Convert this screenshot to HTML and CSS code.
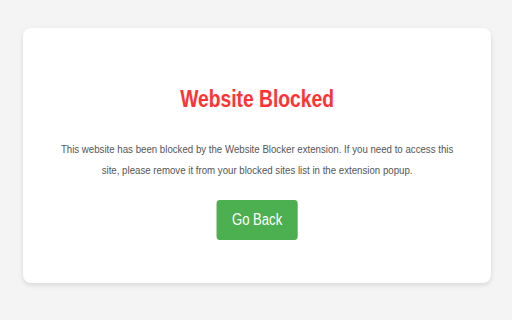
FILE: index.html
```html
<!DOCTYPE html>
<html lang="en">
<head>
    <meta charset="UTF-8">
    <meta name="viewport" content="width=device-width, initial-scale=1.0">
    <title>Website Blocked</title>
    <link rel="stylesheet" href="styles.css">
</head>
<body>
    <!-- Blocked page card -->
    <div class="container">
        <div class="content">
            <h1>Website Blocked</h1>
            <p>This website has been blocked by the Website Blocker extension. If you need to access this site, please remove it from your blocked sites list in the extension popup.</p>
            <button class="back-button" onclick="history.back()">Go Back</button>
        </div>
    </div>
</body>
</html>
```

FILE: styles.css
```css
* {
  margin: 0;
  padding: 0;
  box-sizing: border-box;
}

body {
  font-family: "Liberation Sans", Arial, sans-serif;
  background-color: #f4f4f4;
  padding: 28px 21px 37px 23px;
  height: 100vh;
}

.container {
  background-color: #fff;
  border-radius: 8px;
  box-shadow: 0 2px 5px rgba(0, 0, 0, 0.12);
  height: 100%;
  padding-top: 58px;
  overflow: hidden;
}

/* the text in the shot is narrower than the font, so squeeze it */
.content {
  width: 122%;
  padding: 0 40px;
  text-align: center;
  transform: scaleX(0.82);
  transform-origin: left top;
}

.content h1 {
  color: #ff3333;
  font-size: 23.5px;
  font-weight: bold;
  margin-bottom: 26px;
}

.content p {
  color: #555;
  font-size: 11.8px;
  line-height: 21px;
  margin-bottom: 19px;
}

.back-button {
  font-family: inherit;
  font-size: 16px;
  color: #fff;
  background-color: #4caf50;
  border: none;
  border-radius: 4px;
  height: 40px;
  width: 99px;
  cursor: pointer;
}

.back-button:hover {
  background-color: #45a049;
}
```
